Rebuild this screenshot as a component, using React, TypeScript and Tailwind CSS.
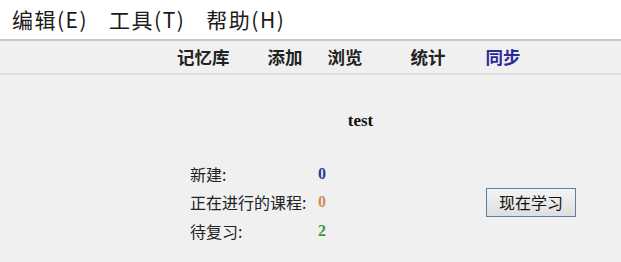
import React from "react";

export default function App() {
  const cjk = { fontFamily: '"Noto Sans CJK SC", "Noto Sans", sans-serif' };
  const serif = { fontFamily: '"Liberation Serif", serif' };
  return (
    <div className="w-[621px] h-[262px] bg-[#f0f0f0] overflow-hidden" style={cjk}>
      <div className="h-[39px] bg-white flex items-center pl-[12px] text-[21px] tracking-[1.5px] text-[#1a1a1a] leading-none">
        <span className="mr-[21px]">编辑(E)</span>
        <span className="mr-[21px]">工具(T)</span>
        <span>帮助(H)</span>
      </div>
      <div className="h-[36px] border-t-2 border-b-2 border-t-[#c8c8c8] border-b-[#dcdcdc] flex items-center text-[17.5px] font-bold text-[#222] leading-none">
        <span className="ml-[177px]">记忆库</span>
        <span className="ml-[38px]">添加</span>
        <span className="ml-[25px]">浏览</span>
        <span className="ml-[48px]">统计</span>
        <span className="ml-[40px] text-[#2a2a9a]">同步</span>
      </div>
      <div className="flex justify-center pt-[33px] pl-[100px]">
        <span className="text-[17px] font-bold text-[#111]" style={serif}>test</span>
      </div>
      <div className="flex items-center mt-[26px]">
        <div className="ml-[190px] w-[296px] flex flex-col text-[16px] text-[#222] leading-[28.5px]">
          <div className="flex">
            <span className="w-[128px]">新建:</span>
            <span className="font-bold text-[#2b3a9a]" style={serif}>0</span>
          </div>
          <div className="flex">
            <span className="w-[128px]">正在进行的课程:</span>
            <span className="font-bold text-[#d08a60]" style={serif}>0</span>
          </div>
          <div className="flex">
            <span className="w-[128px]">待复习:</span>
            <span className="font-bold text-[#3a9a3a]" style={serif}>2</span>
          </div>
        </div>
        <button className="w-[90px] h-[29px] border border-[#5a80a8] bg-gradient-to-b from-[#f4f4f4] to-[#dedede] text-[16px] text-[#111] leading-none flex items-center justify-center">
          现在学习
        </button>
      </div>
    </div>
  );
}
